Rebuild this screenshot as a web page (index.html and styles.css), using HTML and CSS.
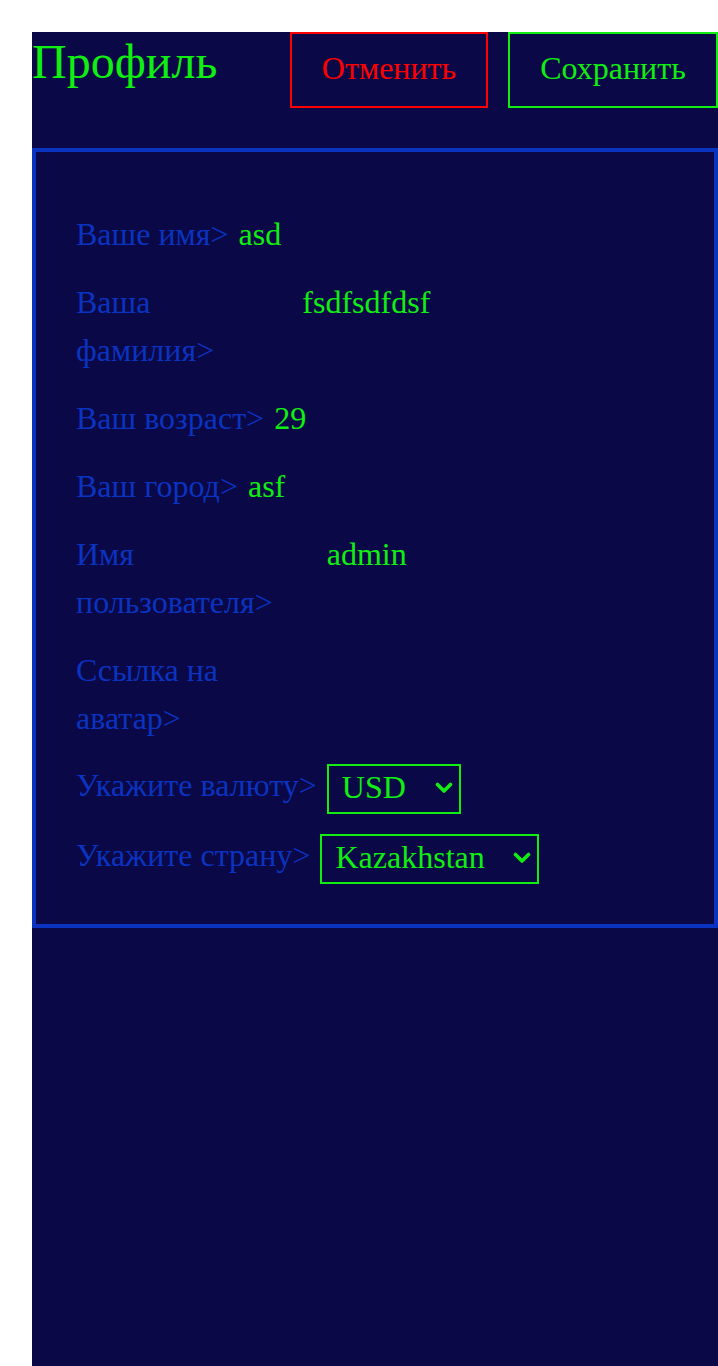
FILE: index.html
```html
<!DOCTYPE html>
<html lang="ru">
<head>
<meta charset="utf-8">
<title>Профиль</title>
<link rel="stylesheet" href="styles.css">
</head>
<body>
<main class="page">
  <header class="topbar">
    <h1 class="title">Профиль</h1>
    <div class="actions">
      <button class="btn btn-cancel" type="button">Отменить</button>
      <button class="btn btn-save" type="button">Сохранить</button>
    </div>
  </header>
  <section class="card">
    <div class="row"><span class="label">Ваше имя&gt;</span><span class="value">asd</span></div>
    <div class="row"><span class="label">Ваша фамилия&gt;</span><span class="value">fsdfsdfdsf</span></div>
    <div class="row"><span class="label">Ваш возраст&gt;</span><span class="value">29</span></div>
    <div class="row"><span class="label">Ваш город&gt;</span><span class="value">asf</span></div>
    <div class="row"><span class="label">Имя пользователя&gt;</span><span class="value">admin</span></div>
    <div class="row"><span class="label">Ссылка на аватар&gt;</span><span class="value"></span></div>
    <div class="select-group">
      <div class="row row-select"><span class="label">Укажите валюту&gt;</span>
        <span class="select-wrap">
          <select class="select"><option>USD</option><option>EUR</option><option>KZT</option></select>
          <svg class="chevron" width="18" height="12" viewBox="0 0 18 12" aria-hidden="true"><polyline points="2.5,2.5 9,9 15.5,2.5" fill="none" stroke="#11ee11" stroke-width="3.6" stroke-linecap="round" stroke-linejoin="round"/></svg>
        </span>
      </div>
      <div class="row row-select"><span class="label">Укажите страну&gt;</span>
        <span class="select-wrap">
          <select class="select"><option>Kazakhstan</option><option>Russia</option></select>
          <svg class="chevron" width="18" height="12" viewBox="0 0 18 12" aria-hidden="true"><polyline points="2.5,2.5 9,9 15.5,2.5" fill="none" stroke="#11ee11" stroke-width="3.6" stroke-linecap="round" stroke-linejoin="round"/></svg>
        </span>
      </div>
    </div>
  </section>
</main>
</body>
</html>
```
FILE: styles.css
```css
html, body {
  margin: 0;
  padding: 0;
  background: #ffffff;
}
body {
  font-family: "Liberation Serif", "Times New Roman", serif;
  overflow: hidden;
}
.page {
  margin: 32px 0 0 32px;
  width: 686px;
  min-height: 1334px;
  background: #0a0846;
}
.topbar {
  display: flex;
  justify-content: space-between;
  align-items: flex-start;
  height: 76px;
  margin-bottom: 40px;
}
.title {
  margin: 0;
  font-weight: normal;
  font-size: 48px;
  line-height: 60px;
  color: #11ee11;
}
.actions {
  display: flex;
  gap: 20px;
}
.btn {
  height: 76px;
  background: transparent;
  font-family: "Liberation Serif", "Times New Roman", serif;
  font-size: 32px;
  padding: 0 0 4px;
  border: 2px solid;
}
.btn-cancel {
  color: #ff0000;
  border-color: #ff0000;
  width: 198px;
}
.btn-save {
  color: #11ee11;
  border-color: #11ee11;
  width: 210px;
}
.card {
  border: 4px solid #0a33c0;
  padding: 58px 40px 40px;
  display: flex;
  flex-direction: column;
  gap: 20px;
}
.row {
  display: flex;
  align-items: baseline;
  gap: 10px;
  font-size: 32px;
  line-height: 48px;
}
.label {
  color: #0a33c0;
  flex: 0 1 auto;
}
.value {
  color: #11ee11;
  flex: 0 1 379px;
}
.select-group {
  display: flex;
  flex-direction: column;
  gap: 20px;
  margin-top: 2px;
}
.row-select {
  align-items: flex-start;
}
.row-select .label {
  margin-top: -3px;
}
.select-wrap {
  position: relative;
  display: inline-flex;
  flex: 0 0 auto;
}
.select {
  -webkit-appearance: none;
  appearance: none;
  font-family: "Liberation Serif", "Times New Roman", serif;
  font-size: 32px;
  line-height: 43px;
  height: 50px;
  color: #11ee11;
  background: transparent;
  border: 2px solid #11ee11;
  border-radius: 0;
  padding: 0 52px 3px 13px;
  margin: 0;
}
.chevron {
  position: absolute;
  right: 8px;
  top: 18px;
  pointer-events: none;
}
```
